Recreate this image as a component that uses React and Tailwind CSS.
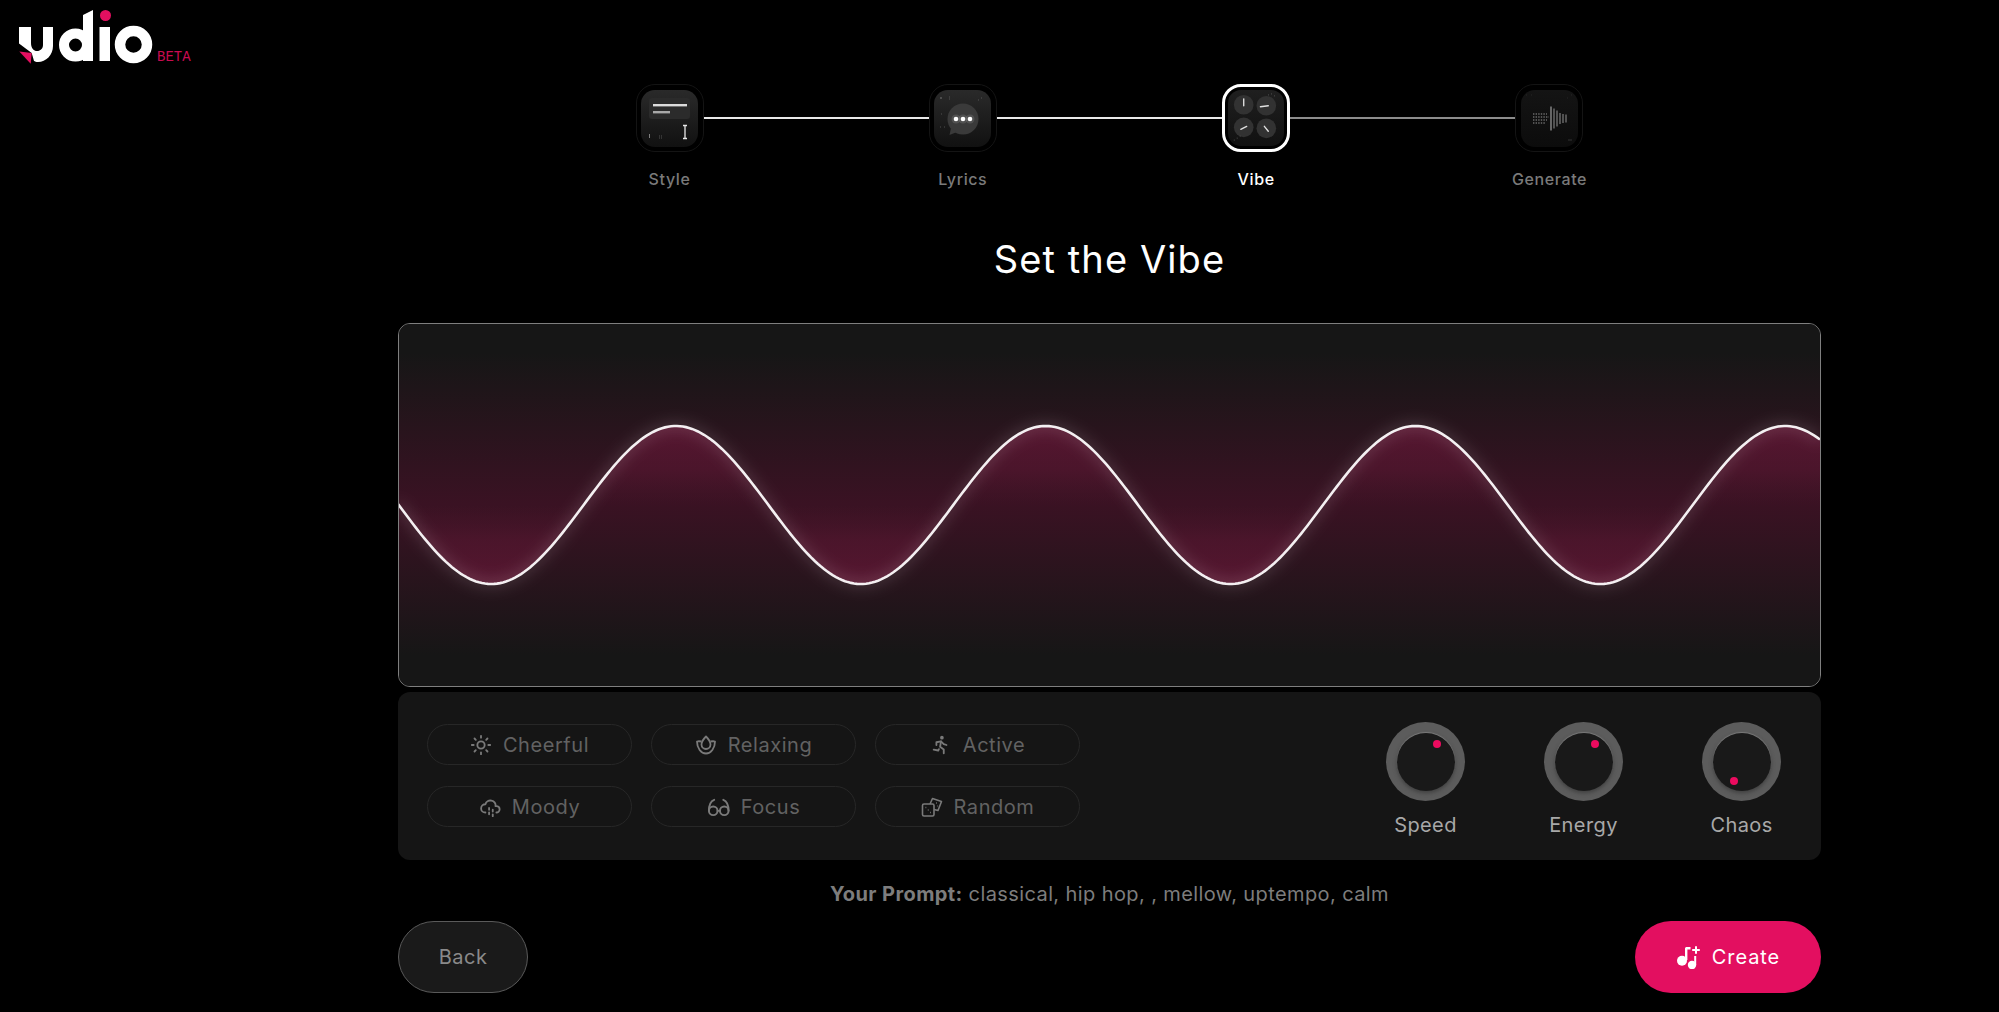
import React from "react";
import { LuSun } from "react-icons/lu";
import { TbRun, TbCloudRain } from "react-icons/tb";

const FONT = "font-['Inter','Liberation_Sans',sans-serif]";

function wavePath() {
  let d = "";
  for (let x = 0; x <= 1423; x += 3) {
    const y = 182 - 79 * Math.cos((2 * Math.PI * (x - 278)) / 369.7);
    d += (x === 0 ? "M" : "L") + x + " " + y.toFixed(2) + " ";
  }
  return d;
}
const WAVE = wavePath();

function Logo() {
  return (
    <svg width="160" height="66" viewBox="0 0 160 66" className="block">
      <path d="M19 27H31V43C31 48.5 34 51 37 51C40.5 51 43 48.5 43 45V27H53V46C53 55 46 62 38 62C36 62 35 61.5 34 61L31.7 53L19 43.5Z" fill="#fff" />
      <path d="M19.3 51.5L31.7 53L30.7 63.7Z" fill="#e30f60" />
      <circle cx="75.5" cy="45" r="11.5" fill="none" stroke="#fff" strokeWidth="10" />
      <path d="M83 15L93 10V61H83Z" fill="#fff" />
      <rect x="99.5" y="27" width="10.5" height="34" fill="#fff" />
      <circle cx="105.5" cy="15.5" r="5.5" fill="#e30f60" />
      <circle cx="133.5" cy="44.5" r="13.5" fill="none" stroke="#fff" strokeWidth="10.5" />
    </svg>
  );
}

function StyleTile() {
  return (
    <svg viewBox="0 0 57 57" className="w-full h-full">
      <rect x="8" y="8" width="41" height="21" rx="3" fill="#2b2b2b" />
      <rect x="12" y="14" width="34" height="2.4" fill="#dcdcdc" />
      <rect x="12" y="21" width="17" height="2.4" fill="#a8a8a8" />
      <path d="M42 35.5h4M44 35.5v13M42 48.5h4" stroke="#e8e8e8" strokeWidth="1.3" fill="none" />
      <path d="M8.5 44v4M18 46h.6M20 46h.6M18 48h.6M20 48h.6" stroke="#999" strokeWidth="0.8" />
    </svg>
  );
}
function LyricsTile() {
  return (
    <svg viewBox="0 0 57 57" className="w-full h-full">
      <circle cx="29" cy="29" r="15.5" fill="#3a3a3a" />
      <path d="M17 38l-1.5 7 7.5-3z" fill="#3a3a3a" />
      <circle cx="22" cy="29" r="4.5" fill="#fff" fillOpacity="0.12" />
      <circle cx="29" cy="29" r="4.5" fill="#fff" fillOpacity="0.12" />
      <circle cx="36" cy="29" r="4.5" fill="#fff" fillOpacity="0.12" />
      <circle cx="22" cy="29" r="2.3" fill="#fff" />
      <circle cx="29" cy="29" r="2.3" fill="#fff" />
      <circle cx="36" cy="29" r="2.3" fill="#fff" />
      <path d="M7 7v2M15 7h.6M15 9h.6M44 10h.6M47 8h.6M7 24h.6M6 37h.6M10 37h.6" stroke="#888" strokeWidth="0.8" />
    </svg>
  );
}
function VibeTile() {
  const knobs = [
    [16, 15, "M16 9v7"],
    [39, 16, "M33 17l8-1"],
    [16, 38, "M13 40l6-3"],
    [39, 39, "M37 37l4 5"],
  ];
  return (
    <svg viewBox="0 0 57 57" className="w-full h-full">
      {knobs.map(([x, y, d], i) => (
        <g key={i}>
          <circle cx={x} cy={y} r="10" fill="#323232" />
          <path d={d} stroke="#e0e0e0" strokeWidth="1.4" strokeLinecap="round" />
        </g>
      ))}
      <path d="M41 5h.6M44 4h.6M47 6h.6M6 51h.6M9 49h.6M12 47h.6" stroke="#888" strokeWidth="0.8" />
    </svg>
  );
}
function GenerateTile() {
  const bars = [[30, 24], [33, 20], [36, 16], [39, 11], [42, 9], [45, 8]];
  return (
    <svg viewBox="0 0 57 57" className="w-full h-full">
      <path d="M12 24h14M12 27h16M12 30h14M12 33h12" stroke="#6a6a6a" strokeWidth="1.3" strokeDasharray="1.4 1.2" />
      {bars.map(([x, h], i) => (
        <rect key={i} x={x - 0.7} y={28.5 - h / 2} width="1.4" height={h} fill={i === 0 ? "#8a8a8a" : "#6e6e6e"} />
      ))}
      <path d="M5 5h.6M10 5h.6M46 8h.6M50 5h.6M47 50h4" stroke="#3c3c3c" strokeWidth="0.8" />
    </svg>
  );
}

function Step({ label, tile, active, dim }) {
  return (
    <div className="flex flex-col items-center w-[68px]">
      {active ? (
        <div className="w-[68px] h-[68px] rounded-[19px] border-[3px] border-white flex items-center justify-center">
          <div className="w-[56px] h-[56px] rounded-[13px] bg-gradient-to-b from-[#1f1f1f] to-[#111111]">{tile}</div>
        </div>
      ) : (
        <div className="w-[68px] h-[68px] rounded-[19px] border border-[#141414] flex items-center justify-center">
          <div className={`w-[57px] h-[57px] rounded-[14px] bg-gradient-to-b ${dim ? "from-[#141414] to-[#0c0c0c]" : "from-[#2a2a2a] to-[#111111]"}`}>{tile}</div>
        </div>
      )}
      <div className={`mt-[16px] text-[16px] leading-[22px] font-medium tracking-[0.6px] whitespace-nowrap ${active ? "text-white" : "text-[#7a7a7a]"}`}>{label}</div>
    </div>
  );
}

function Chip({ icon, label }) {
  return (
    <div className="h-[41px] rounded-full border border-[#272727] flex items-center justify-center gap-[11px] text-[#626262] text-[20px] tracking-[0.55px]">
      <span className="text-[#7a7a7a] text-[22px] flex">{icon}</span>
      <span>{label}</span>
    </div>
  );
}

function Lotus() {
  return (
    <svg width="22" height="22" viewBox="0 0 22 22" fill="none" stroke="currentColor" strokeWidth="1.8" strokeLinejoin="round">
      <path d="M11 2.5C13.5 5 15.5 7.5 15.5 10.5C15.5 13 13.5 15 11 15C8.5 15 6.5 13 6.5 10.5C6.5 7.5 8.5 5 11 2.5Z" />
      <path d="M6.5 7.5C4.8 7.2 3.5 7 2 7.5C2 14 6 19.5 11 19.5C16 19.5 20 14 20 7.5C18.5 7 17.2 7.2 15.5 7.5" />
    </svg>
  );
}
function Glasses() {
  return (
    <svg width="23" height="22" viewBox="0 0 24 22" fill="none" stroke="currentColor" strokeWidth="2" strokeLinecap="round">
      <circle cx="6.5" cy="15" r="4.5" />
      <circle cx="18" cy="15" r="4.5" />
      <path d="M2 15C2 9 3.5 5 7.5 3.5M22.5 15C22.5 9 21 5 17 3.5M11 15h2.5" />
    </svg>
  );
}
function Dice() {
  return (
    <svg width="22" height="22" viewBox="0 0 22 22" fill="none" stroke="currentColor" strokeWidth="1.6" strokeLinejoin="round">
      <rect x="1.5" y="8" width="11.5" height="12" rx="1.5" />
      <path d="M9 8L11.5 2.5L20.5 5.5L17 14.5L13 13.5" />
      <path d="M4.5 11.5h.8M9 16.5h.8M6.8 14h.8M15 7h.8M16.5 10h.6" strokeWidth="1.4" />
    </svg>
  );
}

function Knob({ label, dot }) {
  return (
    <div className="w-[79px] flex flex-col items-center">
      <div className="relative w-[79px] h-[79px] rounded-full bg-[#5c5c5c] flex items-center justify-center">
        <div className="w-[58px] h-[58px] rounded-full bg-[#191919] shadow-[0_-1px_1px_#7a7a7a,0_2px_4px_#3f3f3f]" />
        <div className={`absolute w-[8px] h-[8px] rounded-full bg-[#ec0b5f] ${dot}`} />
      </div>
      <div className="mt-[10px] text-[20px] leading-[28px] tracking-[0.4px] text-[#a8a8a8] whitespace-nowrap">{label}</div>
    </div>
  );
}

function Visual() {
  return (
    <div className="w-[1423px] h-[364px] rounded-[12px] border border-[#7f7f7f] bg-[#161616] overflow-hidden">
      <svg viewBox="1 1 1421 362" className="w-full h-full block">
        <defs>
          <linearGradient id="base" gradientUnits="userSpaceOnUse" x1="0" y1="30" x2="0" y2="332">
            <stop offset="0" stopColor="#161616" />
            <stop offset="0.5" stopColor="#3a1223" />
            <stop offset="1" stopColor="#161616" />
          </linearGradient>
          <linearGradient id="inner" gradientUnits="userSpaceOnUse" x1="0" y1="103" x2="0" y2="261">
            <stop offset="0" stopColor="#641736" stopOpacity="0.8" />
            <stop offset="0.28" stopColor="#641736" stopOpacity="0.5" />
            <stop offset="0.5" stopColor="#641736" stopOpacity="0" />
            <stop offset="0.72" stopColor="#641736" stopOpacity="0.5" />
            <stop offset="1" stopColor="#641736" stopOpacity="0.8" />
          </linearGradient>
          <filter id="glow" x="-5%" y="-20%" width="110%" height="140%">
            <feGaussianBlur stdDeviation="7" />
          </filter>
        </defs>
        <rect x="0" y="0" width="1423" height="364" fill="url(#base)" />
        <path d={`${WAVE} L1423 182 L0 182 Z`} fill="url(#inner)" />
        <path d={WAVE} fill="none" stroke="#ffffff" strokeOpacity="0.24" strokeWidth="5" filter="url(#glow)" />
        <path d={WAVE} fill="none" stroke="#f4f0f2" strokeWidth="2.6" />
      </svg>
    </div>
  );
}

function CreateIcon() {
  return (
    <svg width="24" height="24" viewBox="0 0 24 24" fill="white">
      <circle cx="6" cy="15.7" r="5" />
      <path d="M9 15V3.5C9 2.5 9.8 2 10.8 2H14.5V4.6H11.4V15Z" />
      <circle cx="16" cy="20" r="4.2" />
      <rect x="18.2" y="11" width="2" height="9" />
      <path d="M20 1.2v7.6M16.2 5h7.6" stroke="white" strokeWidth="2" fill="none" />
    </svg>
  );
}

export default function App() {
  return (
    <div className={`w-full h-[1012px] bg-black flex overflow-hidden ${FONT}`}>
      <aside className="w-[220px] shrink-0 relative">
        <Logo />
        <span className="absolute left-[157px] top-[50px] text-[14px] leading-[14px] text-[#c90b50] font-['Liberation_Mono',monospace]">BETA</span>
      </aside>
      <main className="flex-1 flex flex-col items-center pt-[84px]">
        <div className="flex items-start">
          <Step label="Style" tile={<StyleTile />} />
          <div className="w-[225.33px] h-[2px] mt-[33px] bg-[#e8e8e8]" />
          <Step label="Lyrics" tile={<LyricsTile />} />
          <div className="w-[225.33px] h-[2px] mt-[33px] bg-[#e8e8e8]" />
          <Step label="Vibe" tile={<VibeTile />} active />
          <div className="w-[225.33px] h-[2px] mt-[33px] bg-[#8c8c8c]" />
          <Step label="Generate" tile={<GenerateTile />} dim />
        </div>
        <h1 className="mt-[49px] text-[38px] leading-[40px] text-white font-normal tracking-[1.1px]">Set the Vibe</h1>
        <div className="mt-[44px]">
          <Visual />
        </div>
        <div className="mt-[5px] w-[1423px] h-[168px] rounded-[12px] bg-[#151515] flex justify-between pl-[29px] pr-[40px] pt-[32px]">
          <div className="grid grid-cols-[205px_205px_205px] gap-x-[19px] gap-y-[21px] content-start">
            <Chip icon={<LuSun />} label="Cheerful" />
            <Chip icon={<Lotus />} label="Relaxing" />
            <Chip icon={<TbRun />} label="Active" />
            <Chip icon={<TbCloudRain />} label="Moody" />
            <Chip icon={<Glasses />} label="Focus" />
            <Chip icon={<Dice />} label="Random" />
          </div>
          <div className="flex gap-[79px] -mt-[2px]">
            <Knob label="Speed" dot="left-[47px] top-[18px]" />
            <Knob label="Energy" dot="left-[47px] top-[18px]" />
            <Knob label="Chaos" dot="left-[28px] top-[55px]" />
          </div>
        </div>
        <p className="mt-[20px] text-[20px] leading-[28px] tracking-[0.4px] text-[#7d7d7d] whitespace-nowrap">
          <b className="font-bold">Your Prompt:</b> classical, hip hop, , mellow, uptempo, calm
        </p>
        <div className="mt-[13px] w-[1423px] flex justify-between">
          <button className="w-[130px] h-[72px] rounded-full bg-[#1a1a1a] border border-[#5a5a5a] text-[#8a8a8a] text-[20px] tracking-[0.5px]">Back</button>
          <button className="w-[186px] h-[72px] rounded-full bg-[#e30f60] text-white text-[20px] tracking-[0.9px] flex items-center justify-center gap-[12px]">
            <CreateIcon />
            Create
          </button>
        </div>
      </main>
    </div>
  );
}
